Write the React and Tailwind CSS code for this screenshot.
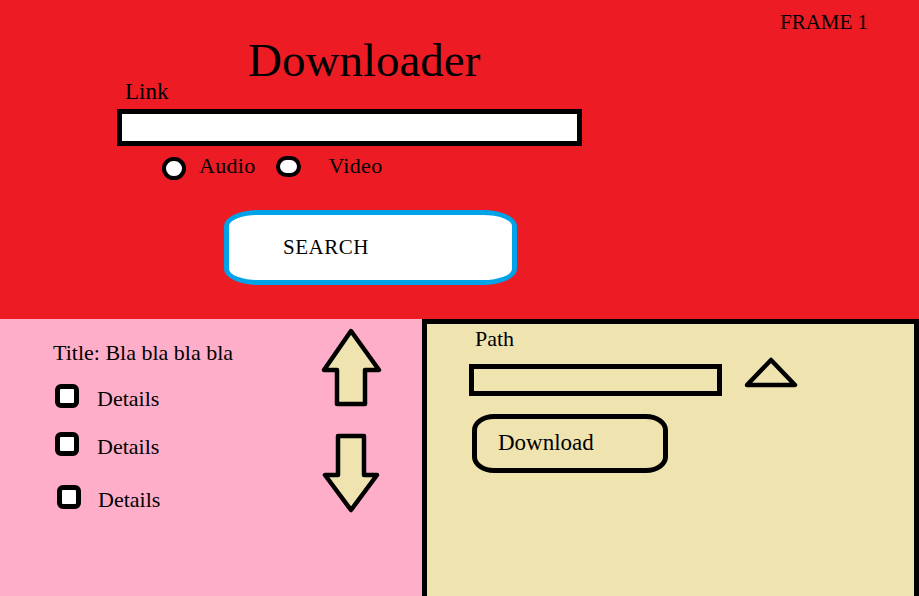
export default function App() {
  return (
    <div className="w-[919px] h-[596px] overflow-hidden flex flex-col font-['Liberation_Serif',serif] text-black">
      {/* top: link + search */}
      <div className="h-[319px] bg-[#ED1C24] flex">
        <div className="w-[600px] pl-[117px] flex flex-col">
          <h1 className="ml-[131px] mt-[38px] text-[47px] leading-[44px] font-normal">Downloader</h1>
          <label className="ml-[8px] text-[23px] leading-[20px]">Link</label>
          <div className="mt-[7px] w-[465px] h-[37px] border-[5px] border-black bg-white" />
          <div className="ml-[45px] mt-[8px] flex items-start text-[22px] leading-[24px]">
            <span className="mt-[3px] w-[24px] h-[23px] rounded-full border-[4px] border-black bg-white" />
            <span className="ml-[13px] tracking-[0.3px]">Audio</span>
            <span className="ml-[20px] mt-[2px] w-[25px] h-[21px] rounded-full border-[4px] border-black bg-white" />
            <span className="ml-[28px] tracking-[0.3px]">Video</span>
          </div>
          <button className="ml-[107px] mt-[30px] w-[293px] h-[75px] rounded-[34px/16px] border-[5px] border-[#00A2E8] bg-white text-left pl-[54px] text-[21px] tracking-[0.5px]">
            SEARCH
          </button>
        </div>
        <div className="flex-1 pl-[180px] pt-[11px] text-[21px] leading-[22px]">FRAME 1</div>
      </div>

      {/* bottom */}
      <div className="flex-1 flex">
        <div className="w-[422px] bg-[#FFAEC9] flex">
          <div className="w-[320px] pl-[53px] pt-[22px] flex flex-col text-[22px] leading-[24px]">
            <p>Title: Bla bla bla bla</p>
            <div className="mt-[19px] ml-[2px] flex items-start">
              <span className="w-[24px] h-[24px] rounded-[6px] border-[5px] border-black bg-white" />
              <span className="ml-[18px] mt-[3px]">Details</span>
            </div>
            <div className="mt-[21px] ml-[2px] flex items-start">
              <span className="w-[24px] h-[24px] rounded-[6px] border-[5px] border-black bg-white" />
              <span className="ml-[18px] mt-[3px]">Details</span>
            </div>
            <div className="mt-[26px] ml-[4px] flex items-start">
              <span className="w-[24px] h-[24px] rounded-[6px] border-[5px] border-black bg-white" />
              <span className="ml-[17px] mt-[3px]">Details</span>
            </div>
          </div>
          <div className="pt-[8px] flex flex-col">
            <svg width="64" height="82" viewBox="0 0 64 82">
              <polygon
                points="31,4 59,43 45,43 45,77 17,77 17,43 4,43"
                fill="#EFE4B0"
                stroke="black"
                strokeWidth="4.5"
                strokeLinejoin="round"
              />
            </svg>
            <svg className="mt-[21px]" width="64" height="86" viewBox="0 0 64 86">
              <polygon
                points="18,6 44,6 44,45 57,45 31,80 5,45 18,45"
                fill="#EFE4B0"
                stroke="black"
                strokeWidth="4.5"
                strokeLinejoin="round"
              />
            </svg>
          </div>
        </div>

        <div className="flex-1 bg-[#EFE4B0] border-[5px] border-b-0 border-black flex flex-col">
          <p className="ml-[48px] mt-[3px] text-[22px] leading-[24px]">Path</p>
          <div className="mt-[6px] ml-[42px] flex items-start">
            <div className="mt-[7px] w-[253px] h-[32px] border-[5px] border-black" />
            <svg className="ml-[22px]" width="55" height="31" viewBox="0 0 55 31">
              <polygon
                points="27,3 51,28 3,28"
                fill="none"
                stroke="black"
                strokeWidth="4.5"
                strokeLinejoin="round"
              />
            </svg>
          </div>
          <button className="mt-[18px] ml-[45px] w-[196px] h-[59px] rounded-[22px/16px] border-[5px] border-black text-left pl-[21px] text-[23px]">
            Download
          </button>
        </div>
      </div>
    </div>
  );
}
